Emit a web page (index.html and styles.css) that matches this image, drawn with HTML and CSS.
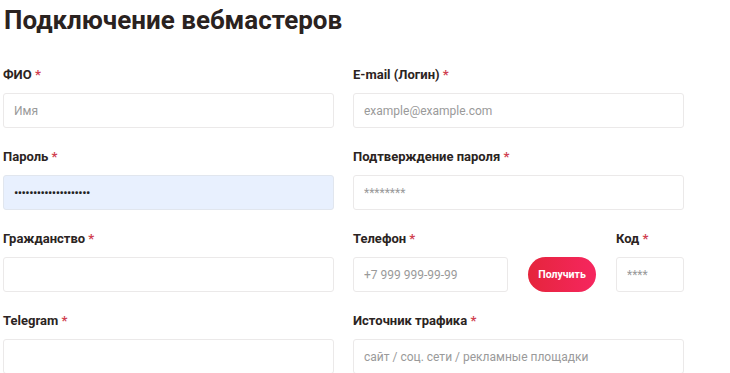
FILE: index.html
```html
<!DOCTYPE html>
<html lang="ru">
<head>
  <meta charset="UTF-8" />
  <meta name="viewport" content="width=device-width, initial-scale=1" />
  <title>Подключение вебмастеров</title>
  <link rel="stylesheet" href="styles.css">
</head>
<body>
  <form class="signup" action="#" method="POST">
    <h1>Подключение вебмастеров</h1>

    <div class="grid">
      <div class="field">
        <label for="fio">ФИО <span class="req">*</span></label>
        <input type="text" id="fio" placeholder="Имя" />
      </div>
      <div class="field">
        <label for="email">E-mail (Логин) <span class="req">*</span></label>
        <input type="email" id="email" placeholder="example@example.com" />
      </div>

      <div class="field">
        <label for="password">Пароль <span class="req">*</span></label>
        <input type="password" id="password" class="filled" value="12345678901234567890" />
      </div>
      <div class="field">
        <label for="confirm">Подтверждение пароля <span class="req">*</span></label>
        <input type="text" id="confirm" placeholder="********" />
      </div>

      <div class="field">
        <label for="citizen">Гражданство <span class="req">*</span></label>
        <input type="text" id="citizen" />
      </div>
      <div class="phone-row">
        <div class="field phone">
          <label for="phone">Телефон <span class="req">*</span></label>
          <input type="text" id="phone" placeholder="+7 999 999-99-99" />
        </div>
        <button type="button" class="get-code">Получить</button>
        <div class="field code">
          <label for="code">Код <span class="req">*</span></label>
          <input type="text" id="code" placeholder="****" />
        </div>
      </div>

      <div class="field">
        <label for="telegram">Telegram <span class="req">*</span></label>
        <input type="text" id="telegram" />
      </div>
      <div class="field">
        <label for="source">Источник трафика <span class="req">*</span></label>
        <input type="text" id="source" placeholder="сайт / соц. сети / рекламные площадки" />
      </div>
    </div>
  </form>
</body>
</html>
```

FILE: styles.css
```css
* {
  margin: 0;
  padding: 0;
  box-sizing: border-box;
}

body {
  font-family: Roboto, "Noto Sans", Arial, sans-serif;
  background: #fff;
  color: #2b2422;
}

.signup {
  width: 690px;
  padding: 0 0 0 3px;
}

.signup h1 {
  font-size: 26px;
  font-weight: 700;
  line-height: 40px;
  margin-left: 1px;
  color: #2a2220;
}

.grid {
  display: grid;
  grid-template-columns: 331px 331px;
  column-gap: 19px;
  row-gap: 20px;
  margin-top: 26px;
}

.field label {
  display: block;
  font-size: 13px;
  font-weight: 700;
  line-height: 18px;
  margin-bottom: 9px;
}

.req {
  color: #d04050;
}

.field input {
  display: block;
  width: 100%;
  height: 35px;
  padding: 0 10px;
  border: 1px solid #ebe9e9;
  border-radius: 3px;
  background: #fff;
  font-family: inherit;
  font-size: 12px;
  color: #333;
  outline: none;
}

.field input::placeholder {
  color: #9a9a9a;
}

.field input.filled {
  background: #e8f0fe;
  border-color: #e1e6ee;
  color: #222;
  font-size: 13px;
  letter-spacing: -0.6px;
}

.phone-row {
  display: flex;
  align-items: flex-end;
  gap: 20px;
}

.phone {
  width: 155px;
}

.code {
  width: 68px;
}

.get-code {
  width: 68px;
  height: 35px;
  border: none;
  border-radius: 18px;
  background: linear-gradient(90deg, #e5253c, #f6265f);
  color: #fff;
  font-family: inherit;
  font-size: 10.5px;
  font-weight: 700;
  cursor: pointer;
}
```
